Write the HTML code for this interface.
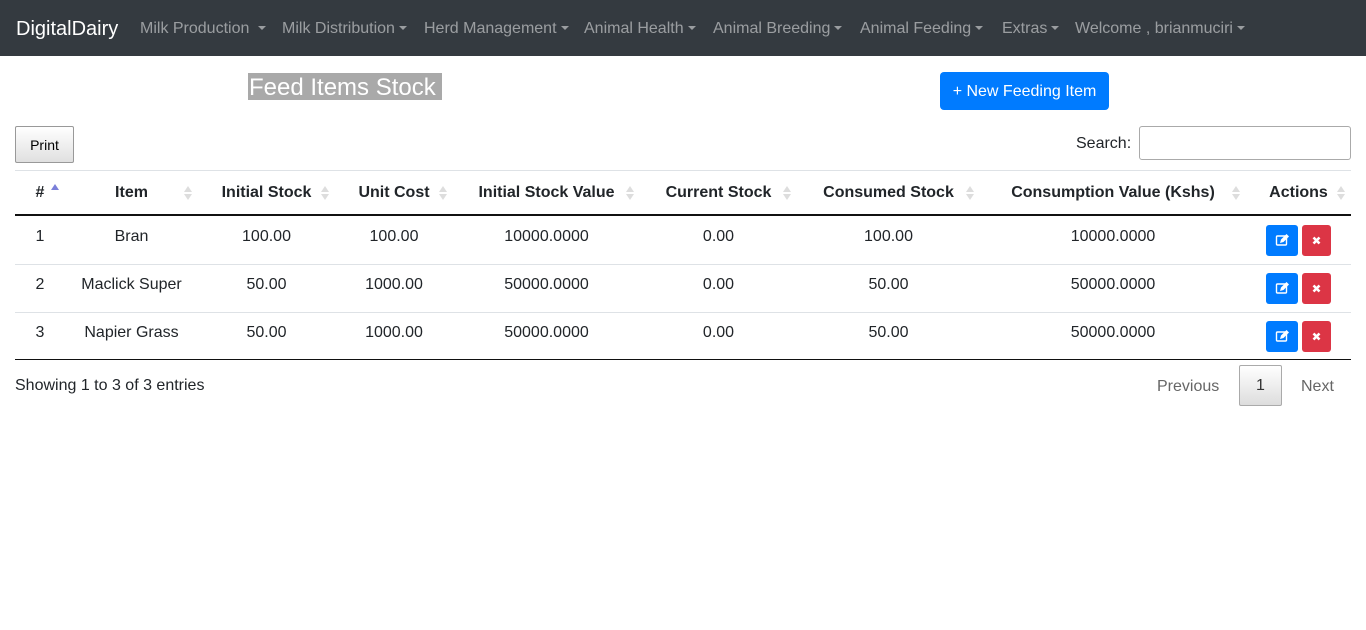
<!DOCTYPE html>
<html><head><meta charset="utf-8"><style>
*{box-sizing:border-box;margin:0;padding:0}
body{width:1366px;height:630px;background:#fff;font-family:"Liberation Sans",Arial,sans-serif;color:#212529;position:relative;overflow:hidden;font-size:16px}
.nav{position:absolute;left:0;top:0;width:1366px;height:56px;background:#343a40}
.nav span{position:absolute;top:19px;color:rgba(255,255,255,.5);white-space:nowrap;font-size:16px;line-height:20px}
.nav .brand{color:#fff;font-size:20px;top:17px;line-height:24px}
.car{display:inline-block;width:0;height:0;border-left:4px solid transparent;border-right:4px solid transparent;border-top:4.5px solid rgba(255,255,255,.5);vertical-align:3px;margin-left:4px}
.abs{position:absolute}
.title{left:248px;top:73px;height:27px;background:#a9a9a9;color:#fff;font-size:24px;line-height:29px;padding:0 6px 0 1px}
.newbtn{left:940px;top:72px;width:169px;height:38px;background:#007bff;border-radius:4px;color:#fff;font-size:16px;line-height:40px;text-align:center}
.print{left:15px;top:126px;width:59px;height:37px;border:1px solid #999;border-radius:2px;background:linear-gradient(#fff,#e0e0e0);font-size:14px;line-height:37px;text-align:center;color:#000}
.search{left:1076px;top:135px;font-size:16px}
.sinput{left:1139px;top:126px;width:212px;height:34px;border:1px solid #aaa;border-radius:3px}
.line{position:absolute;left:15px;width:1336px}
.cell{position:absolute;text-align:center;line-height:20px;font-size:16px}
.h{font-weight:bold;top:183px}
.sort{position:absolute;top:185px;width:8px;height:16px}
.sort:before{content:"";position:absolute;left:0;top:1px;border-left:4px solid transparent;border-right:4px solid transparent;border-bottom:6px solid #ddd}
.sort:after{content:"";position:absolute;left:0;top:9px;border-left:4px solid transparent;border-right:4px solid transparent;border-top:6px solid #ddd}
.sort.asc:after{display:none}.sort.asc:before{border-bottom-color:#7b7fd9;top:-1px}
.btn{position:absolute;height:31px;border-radius:3px}
.ed{background:#007bff;width:32px}.dl{background:#dc3545;width:29px}
.pg{font-size:16px;color:#666}
</style></head><body>
<div class="nav">
<span class="brand" style="left:16px">DigitalDairy</span>
<span style="left:140px">Milk Production <i class="car"></i></span>
<span style="left:282px">Milk Distribution<i class="car"></i></span>
<span style="left:424px">Herd Management<i class="car"></i></span>
<span style="left:584px">Animal Health<i class="car"></i></span>
<span style="left:713px">Animal Breeding<i class="car"></i></span>
<span style="left:860px">Animal Feeding<i class="car"></i></span>
<span style="left:1002px">Extras<i class="car"></i></span>
<span style="left:1075px">Welcome , brianmuciri<i class="car"></i></span>
</div>
<div class="abs title">Feed Items Stock</div>
<div class="abs newbtn">+ New Feeding Item</div>
<div class="abs print">Print</div>
<div class="abs search">Search:</div>
<div class="abs sinput"></div>
<div class="line" style="top:170px;height:1px;background:#dee2e6"></div>
<div class="line" style="top:214px;height:2px;background:#111"></div>
<div class="line" style="top:264px;height:1px;background:#dee2e6"></div>
<div class="line" style="top:312px;height:1px;background:#dee2e6"></div>
<div class="line" style="top:359px;height:1px;background:#111"></div>

<div class="cell h" style="left:15px;width:50px">#</div><div class="sort asc" style="left:51px"></div>
<div class="cell h" style="left:65px;width:133px">Item</div><div class="sort" style="left:184px"></div>
<div class="cell h" style="left:198px;width:137px">Initial Stock</div><div class="sort" style="left:321px"></div>
<div class="cell h" style="left:335px;width:118px">Unit Cost</div><div class="sort" style="left:439px"></div>
<div class="cell h" style="left:453px;width:187px">Initial Stock Value</div><div class="sort" style="left:626px"></div>
<div class="cell h" style="left:640px;width:157px">Current Stock</div><div class="sort" style="left:783px"></div>
<div class="cell h" style="left:797px;width:183px">Consumed Stock</div><div class="sort" style="left:966px"></div>
<div class="cell h" style="left:980px;width:266px">Consumption Value (Kshs)</div><div class="sort" style="left:1232px"></div>
<div class="cell h" style="left:1246px;width:105px">Actions</div><div class="sort" style="left:1337px"></div>

<div class="cell" style="top:227px;left:15px;width:50px">1</div>
<div class="cell" style="top:227px;left:65px;width:133px">Bran</div>
<div class="cell" style="top:227px;left:198px;width:137px">100.00</div>
<div class="cell" style="top:227px;left:335px;width:118px">100.00</div>
<div class="cell" style="top:227px;left:453px;width:187px">10000.0000</div>
<div class="cell" style="top:227px;left:640px;width:157px">0.00</div>
<div class="cell" style="top:227px;left:797px;width:183px">100.00</div>
<div class="cell" style="top:227px;left:980px;width:266px">10000.0000</div>

<div class="cell" style="top:275px;left:15px;width:50px">2</div>
<div class="cell" style="top:275px;left:65px;width:133px">Maclick Super</div>
<div class="cell" style="top:275px;left:198px;width:137px">50.00</div>
<div class="cell" style="top:275px;left:335px;width:118px">1000.00</div>
<div class="cell" style="top:275px;left:453px;width:187px">50000.0000</div>
<div class="cell" style="top:275px;left:640px;width:157px">0.00</div>
<div class="cell" style="top:275px;left:797px;width:183px">50.00</div>
<div class="cell" style="top:275px;left:980px;width:266px">50000.0000</div>

<div class="cell" style="top:323px;left:15px;width:50px">3</div>
<div class="cell" style="top:323px;left:65px;width:133px">Napier Grass</div>
<div class="cell" style="top:323px;left:198px;width:137px">50.00</div>
<div class="cell" style="top:323px;left:335px;width:118px">1000.00</div>
<div class="cell" style="top:323px;left:453px;width:187px">50000.0000</div>
<div class="cell" style="top:323px;left:640px;width:157px">0.00</div>
<div class="cell" style="top:323px;left:797px;width:183px">50.00</div>
<div class="cell" style="top:323px;left:980px;width:266px">50000.0000</div>

<svg width="0" height="0" style="position:absolute"><defs>
<g id="e"><rect x="10.5" y="11" width="10" height="9" rx="1" fill="none" stroke="#fff" stroke-width="1.4"/><path d="M14 18l1-3.5 5.5-5.5 2.5 2.5-5.5 5.5z" fill="#fff"/></g>
<g id="x"><path d="M11.5 12.5l6 6M17.5 12.5l-6 6" stroke="#fff" stroke-width="2.6"/></g>
</defs></svg>
<svg class="btn ed" style="left:1266px;top:225px" viewBox="0 0 32 31"><use href="#e"/></svg>
<svg class="btn dl" style="left:1302px;top:225px" viewBox="0 0 29 31"><use href="#x"/></svg>
<svg class="btn ed" style="left:1266px;top:273px" viewBox="0 0 32 31"><use href="#e"/></svg>
<svg class="btn dl" style="left:1302px;top:273px" viewBox="0 0 29 31"><use href="#x"/></svg>
<svg class="btn ed" style="left:1266px;top:321px" viewBox="0 0 32 31"><use href="#e"/></svg>
<svg class="btn dl" style="left:1302px;top:321px" viewBox="0 0 29 31"><use href="#x"/></svg>

<div class="abs" style="left:15px;top:377px;font-size:16px">Showing 1 to 3 of 3 entries</div>
<div class="abs pg" style="left:1157px;top:378px">Previous</div>
<div class="abs" style="left:1239px;top:365px;width:43px;height:41px;border:1px solid #aaa;border-radius:2px;background:linear-gradient(#fff,#ddd);text-align:center;line-height:40px;color:#333">1</div>
<div class="abs pg" style="left:1301px;top:378px">Next</div>
</body></html>
